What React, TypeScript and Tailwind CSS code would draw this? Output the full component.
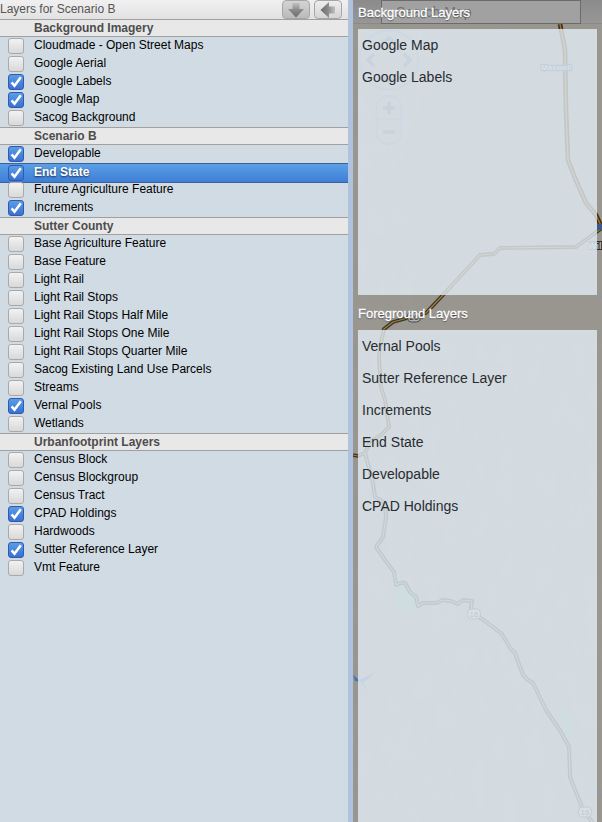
import React from "react";

type Row = { label: string; kind?: "group" | "selected"; on?: boolean };

const rows: Row[] = [
  { label: "Background Imagery", kind: "group" },
  { label: "Cloudmade - Open Street Maps" },
  { label: "Google Aerial" },
  { label: "Google Labels", on: true },
  { label: "Google Map", on: true },
  { label: "Sacog Background" },
  { label: "Scenario B", kind: "group" },
  { label: "Developable", on: true },
  { label: "End State", kind: "selected", on: true },
  { label: "Future Agriculture Feature" },
  { label: "Increments", on: true },
  { label: "Sutter County", kind: "group" },
  { label: "Base Agriculture Feature" },
  { label: "Base Feature" },
  { label: "Light Rail" },
  { label: "Light Rail Stops" },
  { label: "Light Rail Stops Half Mile" },
  { label: "Light Rail Stops One Mile" },
  { label: "Light Rail Stops Quarter Mile" },
  { label: "Sacog Existing Land Use Parcels" },
  { label: "Streams" },
  { label: "Vernal Pools", on: true },
  { label: "Wetlands" },
  { label: "Urbanfootprint Layers", kind: "group" },
  { label: "Census Block" },
  { label: "Census Blockgroup" },
  { label: "Census Tract" },
  { label: "CPAD Holdings", on: true },
  { label: "Hardwoods" },
  { label: "Sutter Reference Layer", on: true },
  { label: "Vmt Feature" },
];

const background = ["Google Map", "Google Labels"];
const foreground = ["Vernal Pools", "Sutter Reference Layer", "Increments", "End State", "Developable", "CPAD Holdings"];

function Checkbox({ on }: { on?: boolean }) {
  return on ? (
    <span className="mt-px h-4 w-4 shrink-0 rounded-[3px] border border-[#2f5aae] bg-linear-to-b from-[#5a9de6] to-[#3b70d2]">
      <svg viewBox="0 0 14 14" className="block h-3.5 w-3.5">
        <path d="M2.600 7.400 L5.500 10.800 L11.800 2.200" fill="none" stroke="#fff" strokeWidth="2.500" />
      </svg>
    </span>
  ) : (
    <span className="mt-px h-4 w-4 shrink-0 rounded-[3px] border border-[#a9a9a9] bg-linear-to-b from-[#f2f2f2] to-[#d9d9d9]" />
  );
}

function LayerRow({ row }: { row: Row }) {
  if (row.kind === "group")
    return (
      <div className="h-[18px] border-y border-[#a0a0a0] bg-[#e8e8e8] pl-[34px] text-[12px] leading-4 font-bold text-[#4d4d4d]">
        {row.label}
      </div>
    );
  const selected = row.kind === "selected";
  return (
    <div
      className={
        selected
          ? "-mb-0.5 flex h-[20px] border-y border-[#3c6296] bg-linear-to-b from-[#5a9fe6] to-[#3f7ed6] pl-2"
          : "flex h-[18px] pl-2"
      }
    >
      <Checkbox on={row.on} />
      <span
        className={
          selected
            ? "ml-2.5 text-[12px] leading-[16px] font-bold text-white [text-shadow:0_1px_2px_#000a]"
            : "ml-2.5 text-[12px] leading-[16px] text-black"
        }
      >
        {row.label}
      </span>
    </div>
  );
}

function ToolButton({ left }: { left?: boolean }) {
  return (
    <span
      className={
        left
          ? "flex h-[19px] w-7 items-center justify-center rounded-[4px] border border-[#a6a6a6] bg-linear-to-b from-[#eee] to-[#d4d4d4]"
          : "flex h-[19px] w-7 items-center justify-center rounded-[4px] border border-[#a6a6a6] bg-linear-to-b from-[#d4d4d4] to-[#bababa]"
      }
    >
      <svg viewBox="0 0 16 16" className={left ? "h-4 w-4 rotate-90" : "h-4 w-4"}>
        <defs>
          <linearGradient id="arrow" x1="0" y1="0" x2="0" y2="1">
            <stop offset="0" stopColor="#c0c0c0" />
            <stop offset="0.5" stopColor="#888" />
            <stop offset="1" stopColor="#6c6c6c" />
          </linearGradient>
        </defs>
        <path d="M4.5 1h7v6H16l-8 8.5L0 7h4.5z" fill="url(#arrow)" />
      </svg>
    </span>
  );
}

const mainRoad =
  "M602 228 L576 247 L500 248 L494 254 L480 255 L443 295 L426 313 L411 317 L393 322 L384 329 L380 347 L379 357 L381 387 L385 400 L389 427 L381 435 L370 442 L365 453 L358 456 L353 455";
const canyonRoad =
  "M365 453 L373 483 L375 497 L385 503 L386 517 L383 537 L376 547 L385 560 L394 572 L396 585 Q401 582 405 583 L410 592 L416 597 L418 606 L423 603 L436 603 L443 600 L451 601 L458 604 L463 600 L472 601 L471 608 L474 614 L485 621 L502 634 L510 648 L515 653 L523 675 L528 680 L533 683 L546 710 L561 732 L569 747 L570 777 L583 810 L593 823";
const freeway = "M560 24 L565 50 L566 110 L568 160 L575 178 L586 203 L596 215 L602 228";

function Shield({ x, y, n }: { x: number; y: number; n: string }) {
  return (
    <g>
      <rect x={x - 6.5} y={y - 5} width="13" height="10" rx="4" fill="#b0b0ac" stroke="#454b58" />
      <text x={x} y={y + 3} fontSize="8" textAnchor="middle" fill="#222">{n}</text>
    </g>
  );
}

function MapDrawing() {
  return (
    <svg viewBox="353 0 249 822" className="absolute inset-0 h-full w-full font-['Liberation_Sans',Arial,sans-serif]">
      <defs>
        <filter id="terrain" x="0" y="0" width="100%" height="100%">
          <feTurbulence type="fractalNoise" baseFrequency="0.07 0.03" numOctaves="3" seed="4" />
          <feColorMatrix values="0 0 0 0 0.35 0 0 0 0 0.34 0 0 0 0 0.32 1.2 0 0 0 -0.48" />
        </filter>
      </defs>
      <rect x="353" y="24" width="70" height="320" filter="url(#terrain)" opacity="0.4" />
      <rect x="353" y="344" width="249" height="478" filter="url(#terrain)" opacity="0.4" />
      <path d="M390 580 L402 584 L416 598 L417 610 L405 612 L396 607 L395 596 Z" fill="#84a080" />
      <path d="M558 706 L574 719 L575 736 L568 738 L561 724 Z" fill="#84a080" />
      <g fill="none" stroke="#8797ac" strokeWidth="1">
        <path d="M505 24 L496 45 L503 70 L493 98 L493 120 L484 147 L488 195 L510 210 L526 228 L530 257 L548 273 L570 283 L602 297" />
        <path d="M484 614 Q498 608 497 625 L507 640 Q520 642 534 646 L530 672 L541 678 L550 700 L561 707 L573 744 L580 765 L588 772 L602 797" />
      </g>
      <path d="M353 675 L359 680 L368 676 L375 672 L367 680 L363 682 L368 693 L361 682 L355 681 Z" fill="#4a70b8" />
      <g fill="none" strokeLinejoin="round">
        <path d={mainRoad} stroke="#3d3620" strokeWidth="3.8" />
        <path d={canyonRoad} stroke="#3e4034" strokeWidth="4" />
        <path d={freeway} stroke="#3f2d14" strokeWidth="4.6" />
        <path d={mainRoad} stroke="#9a8046" strokeWidth="1.2" />
        <path d={canyonRoad} stroke="#8f8f7c" strokeWidth="1.2" />
        <path d={freeway} stroke="#a37030" strokeWidth="1.5" />
      </g>
      <Shield x={414} y={317} n="20" />
      <Shield x={474} y={614} n="16" />
      <Shield x={585} y={812} n="16" />
      <text x="541" y="70" fontSize="8" fontWeight="bold" fill="#aaaeb4" stroke="#555b68" strokeWidth="2.5" paintOrder="stroke">Maxwell</text>
      <path d="M597 224h5v6h-5z" fill="#3f5688" />
      <rect x="588" y="241" width="14" height="9" fill="#2c2c2c" opacity="0.45" />
      <rect x="597" y="241" width="5" height="9" fill="#2c2c2c" />
      <text x="588" y="249" fontSize="9" fontWeight="bold" fill="#bbb">Williams</text>
      <g stroke="#7c8798" strokeWidth="1.8" fill="none">
        <circle cx="389" cy="60" r="29.5" />
        <rect x="376.5" y="96" width="25" height="48" rx="12" />
        <path d="M376.5 119.500h25" />
        <g stroke="#646d78" strokeWidth="3.500">
          <path d="M374 54l-6 6l6 6M404 54l6 6l-6 6M383 43l6-5l6 5M383 77l6 5l6-5M383 108h12M389 102v12M383 132h12" />
        </g>
      </g>
    </svg>
  );
}

function LayerPanel({ items, grow }: { items: string[]; grow?: boolean }) {
  return (
    <ul
      className={
        grow
          ? "flex-1 bg-[rgba(226,236,245,0.8)] pl-1"
          : "h-[266px] bg-[rgba(226,236,245,0.8)] pl-1"
      }
    >
      {items.map((item) => (
        <li key={item} className="h-8 text-[14px] leading-8 text-[#292c2f]">{item}</li>
      ))}
    </ul>
  );
}

export default function App() {
  return (
    <div className="flex h-[822px] w-[602px] overflow-hidden font-['Liberation_Sans',Arial,sans-serif]">
      <aside className="w-[348px] bg-[#d0dbe4]">
        <header className="flex h-[19px] justify-between bg-linear-to-b from-[#f0f0f0] to-[#e2e2e2] pr-1.5">
          <span className="text-[12px] leading-[18px] text-[#555]">Layers for Scenario B</span>
          <span className="flex gap-1">
            <ToolButton />
            <ToolButton left />
          </span>
        </header>
        {rows.map((row) => (
          <LayerRow key={row.label} row={row} />
        ))}
      </aside>
      <div className="w-[5px] bg-[#afc3df]" />
      <main className="relative flex-1 bg-[#98968f]">
        <MapDrawing />
        <div className="absolute inset-x-0 top-0 h-6 border-b border-[#898989] bg-linear-to-b from-[#8b8b8b] to-[#979797] pl-7">
          <div className="h-[24px] w-[200px] border border-[#6b6b6b] bg-[#a1a1a1] pl-3.5 text-[14px] leading-[23px] text-[#707070]">Search Map</div>
        </div>
        <div className="relative flex h-full flex-col px-[5px]">
          <h2 className="h-[29px] text-[13px] leading-[25px] text-white [-webkit-text-stroke:0.3px_white] [text-shadow:0_1px_1px_#444]">Background Layers</h2>
          <LayerPanel items={background} />
          <h2 className="h-[35px] text-[13px] leading-[37px] text-white [-webkit-text-stroke:0.3px_white] [text-shadow:0_1px_1px_#444]">Foreground Layers</h2>
          <LayerPanel items={foreground} grow />
        </div>
      </main>
    </div>
  );
}
